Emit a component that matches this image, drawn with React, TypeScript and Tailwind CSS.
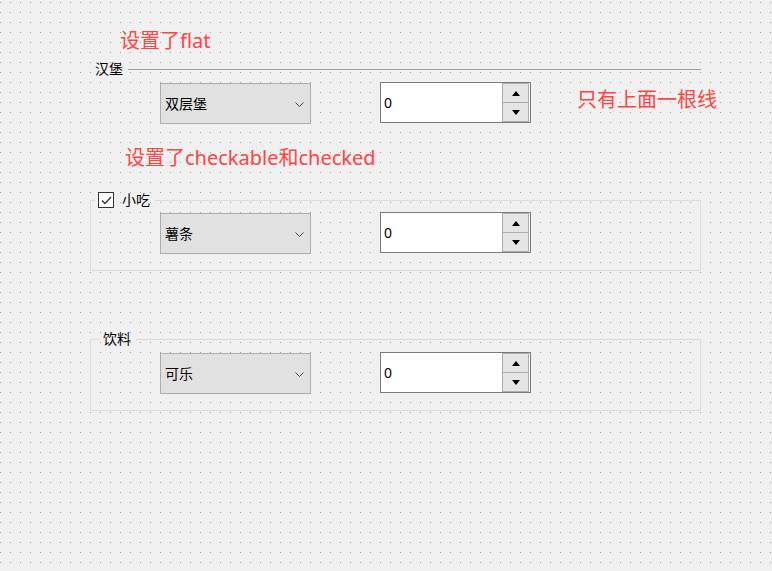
import type { ReactNode } from 'react';

const ComboBox = ({ text }: { text: string }) => (
  <div className="mt-[1px] flex h-[41px] w-[151px] shrink-0 items-center justify-between border border-[#adadad] bg-[#e1e1e1] pl-[4px] pr-[6px]">
    <span className="text-[14px] leading-[16px] text-black">{text}</span>
    <svg width="9" height="5" viewBox="0 0 9 5" className="mt-[1px]">
      <path d="M0.5 0.5 L4.5 4.5 L8.5 0.5" fill="none" stroke="#444" strokeWidth="1" />
    </svg>
  </div>
);

const SpinBox = ({ value }: { value: number }) => (
  <div className="flex h-[41px] w-[151px] border border-[#7a7a7a] bg-white">
    <div className="flex flex-1 items-center pl-[3px] text-[14px] leading-[16px] text-black">{value}</div>
    <div className="flex w-[28px] flex-col pr-[1px]">
      <div className="flex h-[20px] items-center justify-center border border-[#adadad] bg-[#e5e5e5]">
        <svg width="8" height="5" viewBox="0 0 8 5">
          <polygon points="0,5 8,5 4,0" fill="#000" />
        </svg>
      </div>
      <div className="flex flex-1 items-center justify-center border border-t-0 border-[#adadad] bg-[#e5e5e5]">
        <svg width="8" height="5" viewBox="0 0 8 5">
          <polygon points="0,0 8,0 4,5" fill="#000" />
        </svg>
      </div>
    </div>
  </div>
);

const Row = ({ combo, className, children }: { combo: string; className: string; children?: ReactNode }) => (
  <div className={`flex items-start ${className}`}>
    <ComboBox text={combo} />
    <div className="ml-[69px] shrink-0">
      <SpinBox value={0} />
    </div>
    {children}
  </div>
);

const Note = ({ children, className }: { children: ReactNode; className: string }) => (
  <p className={`shrink-0 whitespace-nowrap text-[20px] leading-[24px] text-[#ff4444] ${className}`}>{children}</p>
);

export default function App() {
  return (
    <div
      className="h-[571px] w-[772px] overflow-hidden bg-[#f0f0f0] bg-[conic-gradient(from_270deg_at_1px_1px,#a0a0a0_90deg,transparent_0)] bg-[length:10px_10px] bg-[position:0_2px] text-black"
      style={{ fontFamily: '"Noto Sans", "Noto Sans CJK SC", sans-serif' }}
    >
      <Note className="ml-[120px] pt-[29px]">设置了flat</Note>

      {/* flat: only the top line */}
      <fieldset className="ml-[90px] mt-[8px] w-[611px] min-w-0 border-t border-[#a0a0a0]">
        <legend className="pl-[5px] pr-[5px] text-[14px] leading-[16px]">汉堡</legend>
        <Row combo="双层堡" className="ml-[70px] mt-[5px]">
          <Note className="ml-[46px] mt-[6px]">只有上面一根线</Note>
        </Row>
      </fieldset>

      <Note className="ml-[125px] mt-[22px]">设置了checkable和checked</Note>

      <fieldset className="ml-[90px] mt-[22px] w-[611px] min-w-0 border border-[#dcdcdc] pb-[16px]">
        <legend className="ml-[4px] flex items-center pl-[3px] pr-[5px] text-[14px] leading-[16px]">
          <span className="flex h-[16px] w-[16px] items-center justify-center border border-[#333] bg-white">
            <svg width="11" height="9" viewBox="0 0 11 9">
              <path d="M1 4.5 L4 7.5 L10 1" fill="none" stroke="#333" strokeWidth="1.3" />
            </svg>
          </span>
          <span className="ml-[8px]">小吃</span>
        </legend>
        <Row combo="薯条" className="ml-[69px] mt-[4px]" />
      </fieldset>

      <fieldset className="ml-[90px] mt-[60px] w-[611px] min-w-0 border border-[#dcdcdc] pb-[16px]">
        <legend className="ml-[9px] pl-[3px] pr-[5px] text-[14px] leading-[16px]">饮料</legend>
        <Row combo="可乐" className="ml-[69px] mt-[5px]" />
      </fieldset>
    </div>
  );
}
